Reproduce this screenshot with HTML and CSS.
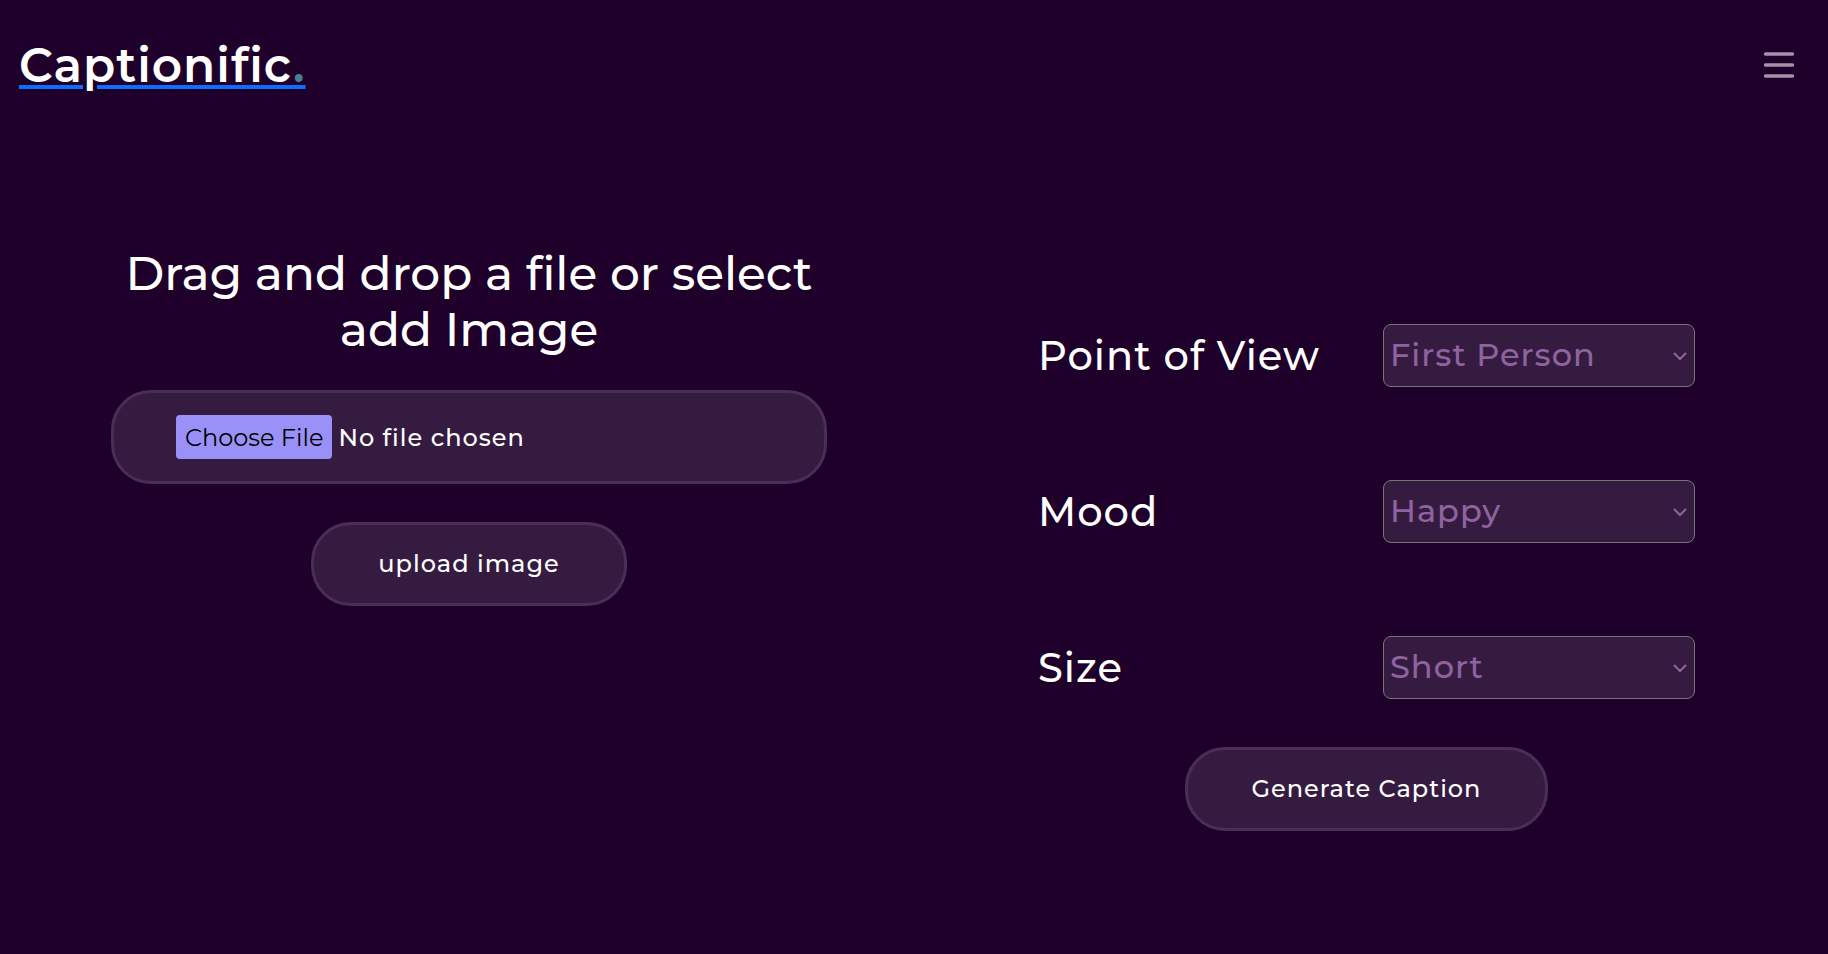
FILE: index.html
```html
<!DOCTYPE html>
<html lang="en">
<head>
<meta charset="utf-8">
<title>Captionific</title>
<link rel="stylesheet" href="styles.css">
</head>
<body>
<header class="header">
  <a class="logo" href="#">Captionific<span class="logo-dot">.</span></a>
  <button class="menu" type="button" aria-label="Menu">
    <svg class="menu-icon" viewBox="0 0 32 32" aria-hidden="true"><path d="M2.5 5H29.5M2.5 16H29.5M2.5 27H29.5"/></svg>
  </button>
</header>
<main class="main">
  <form class="upload">
    <h1 class="title"><label for="image">Drag and drop a file or select add Image</label></h1>
    <input class="pill file" id="image" type="file">
    <button class="pill action" type="button">upload image</button>
  </form>
  <form class="options">
    <div class="rows">
      <div class="row">
        <label class="label" for="view">Point of View</label>
        <span class="field">
          <select class="select" id="view"><option>First Person</option><option>Second Person</option><option>Third Person</option></select>
          <svg class="chevron" viewBox="0 0 14 10" aria-hidden="true"><path d="M1 2L7 8L13 2"/></svg>
        </span>
      </div>
      <div class="row">
        <label class="label" for="mood">Mood</label>
        <span class="field">
          <select class="select" id="mood"><option>Happy</option><option>Sad</option></select>
          <svg class="chevron" viewBox="0 0 14 10" aria-hidden="true"><path d="M1 2L7 8L13 2"/></svg>
        </span>
      </div>
      <div class="row">
        <label class="label" for="size">Size</label>
        <span class="field">
          <select class="select" id="size"><option>Short</option><option>Long</option></select>
          <svg class="chevron" viewBox="0 0 14 10" aria-hidden="true"><path d="M1 2L7 8L13 2"/></svg>
        </span>
      </div>
    </div>
    <button class="pill action" type="button">Generate Caption</button>
  </form>
</main>
</body>
</html>
```
FILE: styles.css
```css
* { box-sizing: border-box; }
body {
  margin: 0;
  min-height: 100vh;
  background: #1e002a;
  color: #fff;
  font-family: Montserrat, Inter, "Open Sans", sans-serif;
  font-weight: 500;
}
.header {
  display: flex;
  align-items: center;
  justify-content: space-between;
  padding: 32px 33px 32px 19px;
}
.logo {
  padding-top: 2px;
  color: #fff;
  font-size: 47px;
  font-weight: 600;
  line-height: 64px;
  letter-spacing: 1px;
  text-decoration: underline #0d6efd 4px;
  text-underline-offset: 3px;
}
.logo-dot { color: #488094; }
.menu {
  display: flex;
  padding: 0;
  border: 0;
  background: none;
}
.menu-icon {
  width: 32px;
  height: 32px;
  fill: none;
  stroke: #a493ab;
  stroke-width: 3.4;
  stroke-linecap: round;
}
.main {
  display: grid;
  grid-template-columns: 716fr 657fr;
  column-gap: 211px;
  align-items: start;
  padding: 116px 133px 48px 111px;
}
.upload, .options {
  display: flex;
  flex-direction: column;
  align-items: center;
}
.title {
  margin: 0 0 32px;
  font-size: 47px;
  font-weight: 500;
  line-height: 56px;
  text-align: center;
}
.pill {
  border: 3px solid #4a2e55;
  border-radius: 40px;
  background: #361b41;
  color: #fff;
  font-family: inherit;
  font-size: 24px;
  font-weight: 500;
  letter-spacing: 1px;
}
.file {
  width: 100%;
  padding: 22px 62px;
  margin-bottom: 38px;
}
.file::file-selector-button {
  height: 44px;
  margin: 0 6px 0 0;
  padding: 0 9px;
  border: 0;
  border-radius: 4px;
  background: #9a91f8;
  color: #000;
  font-family: inherit;
  font-size: 24px;
  font-weight: 400;
  letter-spacing: normal;
}
.action {
  padding: 0 64px;
  line-height: 78px;
}
.options {
  gap: 48px;
  padding-top: 78px;
}
.rows {
  display: grid;
  gap: 93px;
  width: 100%;
}
.row {
  display: grid;
  grid-template-columns: 1fr 312px;
  align-items: center;
}
.label {
  font-size: 40px;
  line-height: 48px;
  letter-spacing: 1px;
}
.field {
  display: grid;
  align-items: center;
}
.select, .chevron { grid-area: 1 / 1; }
.select {
  width: 100%;
  height: 63px;
  padding: 0 40px 2px 6px;
  border: 1px solid #767676;
  border-radius: 8px;
  background: #361b41;
  color: #8e639f;
  font: inherit;
  font-size: 32px;
  letter-spacing: 1px;
  appearance: none;
}
.chevron {
  justify-self: end;
  width: 14px;
  height: 10px;
  margin-right: 8px;
  fill: none;
  stroke: #8e639f;
  stroke-width: 2;
  pointer-events: none;
}
```
